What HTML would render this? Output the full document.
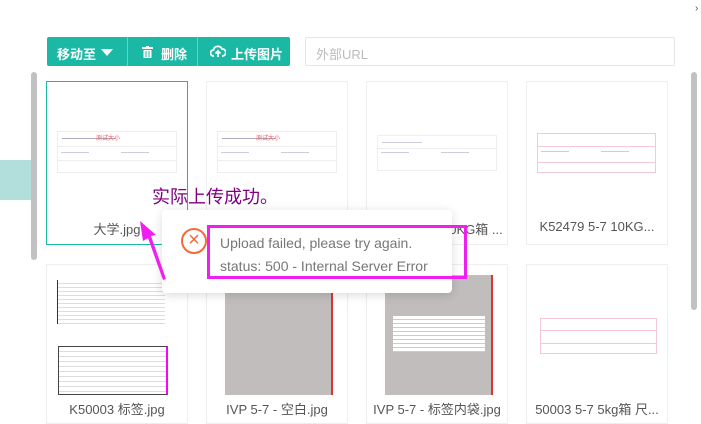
<!DOCTYPE html><html><head><meta charset="utf-8"><style>
*{box-sizing:border-box;margin:0;padding:0}
body{width:701px;height:415px;overflow:hidden;background:#fff;font-family:"Liberation Sans","Noto Sans CJK SC",sans-serif;position:relative}
.abs{position:absolute}
.card{position:absolute;width:142px;height:164px;border:1px solid #eee;background:#fff}
.lbl{position:absolute;left:0;right:0;text-align:center;font-size:13px;color:#555;white-space:nowrap}
.tb{position:absolute;border:1px solid #eee;background:#fff}
.ln{position:absolute;height:1px;background:#ccd}
</style></head><body>
<div class="abs" style="left:695px;top:3px;font-size:10px;color:#555">›</div>
<div class="abs" style="left:47px;top:37px;width:243px;height:29px;background:#1bb9a5;border-radius:2px;color:#fff;font-size:13px;font-weight:bold">
 <span class="abs" style="left:10px;top:7px">移动至</span>
 <span class="abs" style="left:54px;top:12px;width:0;height:0;border-left:6px solid transparent;border-right:6px solid transparent;border-top:7px solid #fff"></span>
 <span class="abs" style="left:80px;top:0;width:1px;height:29px;background:#5fd3c4"></span>
 <svg class="abs" style="left:95px;top:9px" width="11" height="12" viewBox="0 0 11 12"><rect x="0" y="1" width="11" height="2" fill="#fff"/><rect x="4" y="0" width="3" height="2" fill="#fff"/><path d="M1.5 4h8v8h-8z" fill="#fff"/><path d="M4 5v6M7 5v6" stroke="#1bb9a5" stroke-width="1"/></svg>
 <span class="abs" style="left:114px;top:7px">删除</span>
 <span class="abs" style="left:150px;top:0;width:1px;height:29px;background:#5fd3c4"></span>
 <svg class="abs" style="left:163px;top:8px" width="16" height="13" viewBox="0 0 16 13"><path d="M4 11H3.5A3 3 0 0 1 3.5 5 4.5 4.5 0 0 1 12 4 3 3 0 0 1 12.5 11H12M8 12V6M5.5 8.5 8 6l2.5 2.5" fill="none" stroke="#fff" stroke-width="1.8"/></svg>
 <span class="abs" style="left:184px;top:7px">上传图片</span>
</div>
<div class="abs" style="left:305px;top:37px;width:370px;height:29px;border:1px solid #e6e6e6;border-radius:2px;font-size:13px;color:#bbb;padding:6px 10px">外部URL</div>
<div class="abs" style="left:31px;top:72px;width:6px;height:188px;background:#c1c1c1;border-radius:3px"></div>
<div class="abs" style="left:691px;top:72px;width:6px;height:238px;background:#c1c1c1;border-radius:3px"></div>
<div class="abs" style="left:0;top:160px;width:31px;height:40px;background:#b2dfdb"></div>

<div class="card" style="left:46px;top:81px;border-color:#1bb9a5"><div class="lbl" style="top:137px">大学.jpg</div></div>
<div class="card" style="left:206px;top:81px"><div class="lbl" style="top:137px">大学.jpg</div></div>
<div class="card" style="left:366px;top:81px"><div class="lbl" style="top:137px">K52479 5-7 10KG箱 ...</div></div>
<div class="card" style="left:526px;top:81px"><div class="lbl" style="top:137px">K52479 5-7 10KG...</div></div>
<div class="tb" style="left:57px;top:131px;width:120px;height:42px"><div class="ln" style="left:4px;right:60px;top:6px;background:#aab"></div><div class="abs" style="left:38px;top:1px;font-size:6px;color:#e55">测试大小</div><div class="ln" style="left:0;right:0;top:14px;background:#eee"></div><div class="ln" style="left:3px;width:28px;top:20px"></div><div class="ln" style="left:63px;width:28px;top:20px"></div><div class="ln" style="left:0;right:0;top:28px;background:#eee"></div></div>
<div class="tb" style="left:217px;top:131px;width:120px;height:42px"><div class="ln" style="left:4px;right:60px;top:6px;background:#aab"></div><div class="abs" style="left:38px;top:1px;font-size:6px;color:#e55">测试大小</div><div class="ln" style="left:0;right:0;top:14px;background:#eee"></div><div class="ln" style="left:3px;width:28px;top:20px"></div><div class="ln" style="left:63px;width:28px;top:20px"></div><div class="ln" style="left:0;right:0;top:28px;background:#eee"></div></div>
<div class="tb" style="left:377px;top:135px;width:120px;height:36px"><div class="ln" style="left:4px;width:40px;top:6px"></div><div class="ln" style="left:0;right:0;top:12px;background:#eee"></div><div class="ln" style="left:3px;width:28px;top:16px"></div><div class="ln" style="left:63px;width:28px;top:16px"></div></div>
<div class="tb" style="left:537px;top:133px;width:119px;height:40px;border-color:#f4c8d4"><div class="ln" style="left:0;right:0;top:12px;background:#f4c8d4"></div><div class="ln" style="left:0;right:0;top:28px;background:#f4c8d4"></div><div class="ln" style="left:3px;width:28px;top:17px"></div><div class="ln" style="left:63px;width:28px;top:17px"></div></div>

<div class="card" style="left:46px;top:264px;height:160px"><div class="lbl" style="top:134px">K50003 标签.jpg</div></div>
<div class="card" style="left:206px;top:264px;height:160px"><div class="lbl" style="top:134px">IVP 5-7 - 空白.jpg</div></div>
<div class="card" style="left:366px;top:264px;height:160px"><div class="lbl" style="top:134px">IVP 5-7 - 标签内袋.jpg</div></div>
<div class="card" style="left:526px;top:264px;height:160px"><div class="lbl" style="top:134px">50003 5-7 5kg箱 尺...</div></div>
<div class="abs" style="left:57px;top:280px;width:108px;height:44px;border-left:1px solid #333;background:repeating-linear-gradient(#fff 0 3px,#ddd 3px 4px)"></div>
<div class="abs" style="left:58px;top:346px;width:110px;height:49px;border:1px solid #444;border-right:2px solid #f0f;background:repeating-linear-gradient(#fff 0 4px,#ddd 4px 5px)"></div>
<div class="abs" style="left:225px;top:275px;width:108px;height:120px;background:#c2bdbd;border-right:2px solid #d33"></div>
<div class="abs" style="left:385px;top:275px;width:108px;height:120px;background:#c2bdbd;border-right:2px solid #d33"><div class="abs" style="left:8px;top:41px;width:92px;height:36px;background:#fff repeating-linear-gradient(#fff 0 3px,#ccc 3px 4px)"></div></div>
<div class="tb" style="left:540px;top:318px;width:117px;height:36px;border-color:#f4c8d4"><div class="ln" style="left:0;right:0;top:11px;background:#f4c8d4"></div><div class="ln" style="left:0;right:0;top:24px;background:#f4c8d4"></div></div>

<div class="abs" style="left:152px;top:185px;font-size:18px;color:#800080;font-family:'Noto Sans CJK SC',sans-serif;line-height:22px">实际上传成功。</div>
<div class="abs" style="left:162px;top:210px;width:290px;height:83px;background:#fff;border-radius:4px;box-shadow:0 2px 10px rgba(0,0,0,.15)"></div>
<div class="abs" style="left:181px;top:228px;width:26px;height:26px;border:2px solid #f5693b;border-radius:50%;color:#f5693b;font-size:20px;line-height:21px;text-align:center">×</div>
<div class="abs" style="left:207px;top:225px;width:260px;height:54px;border:3px solid #f01ef0"></div>
<div class="abs" style="left:220px;top:232px;font-size:14px;color:#777;line-height:23px">Upload failed, please try again.<br>status: 500 - Internal Server Error</div>
<svg class="abs" style="left:130px;top:215px" width="50" height="75"><path d="M10 6 L26 20 L21 21 L36 64 L33 65 L18 23 L13 26 Z" fill="#f01ef0"/></svg>
</body></html>
